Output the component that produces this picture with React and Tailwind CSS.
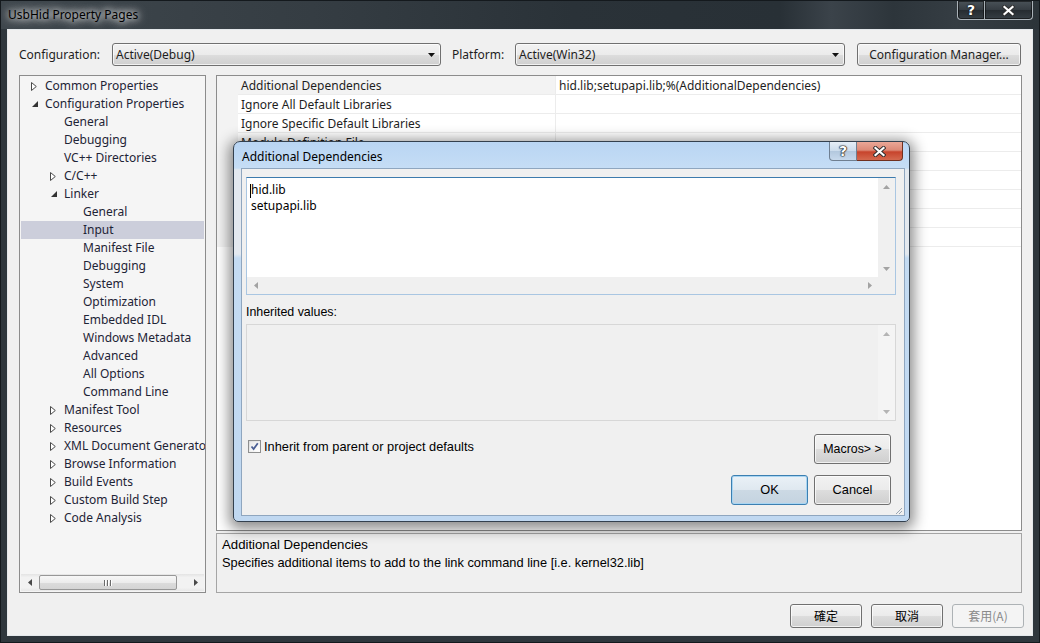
import React from 'react';

const TREE = [
  { t: 'Common Properties', l: 0, a: 'c' },
  { t: 'Configuration Properties', l: 0, a: 'e' },
  { t: 'General', l: 1 },
  { t: 'Debugging', l: 1 },
  { t: 'VC++ Directories', l: 1 },
  { t: 'C/C++', l: 1, a: 'c' },
  { t: 'Linker', l: 1, a: 'e' },
  { t: 'General', l: 2 },
  { t: 'Input', l: 2, sel: true },
  { t: 'Manifest File', l: 2 },
  { t: 'Debugging', l: 2 },
  { t: 'System', l: 2 },
  { t: 'Optimization', l: 2 },
  { t: 'Embedded IDL', l: 2 },
  { t: 'Windows Metadata', l: 2 },
  { t: 'Advanced', l: 2 },
  { t: 'All Options', l: 2 },
  { t: 'Command Line', l: 2 },
  { t: 'Manifest Tool', l: 1, a: 'c' },
  { t: 'Resources', l: 1, a: 'c' },
  { t: 'XML Document Generator', l: 1, a: 'c' },
  { t: 'Browse Information', l: 1, a: 'c' },
  { t: 'Build Events', l: 1, a: 'c' },
  { t: 'Custom Build Step', l: 1, a: 'c' },
  { t: 'Code Analysis', l: 1, a: 'c' },
];

const LVL = ['pl-[9px]', 'pl-[28px]', 'pl-[47px]'];

const PROPS = [
  ['Additional Dependencies', 'hid.lib;setupapi.lib;%(AdditionalDependencies)'],
  ['Ignore All Default Libraries', ''],
  ['Ignore Specific Default Libraries', ''],
  ['Module Definition File', ''],
  ['Add Module to Assembly', ''],
  ['Embed Managed Resource File', ''],
  ['Force Symbol References', ''],
  ['Delay Loaded Dlls', ''],
  ['Assembly Link Resource', ''],
];

const BTN =
  'flex items-center justify-center rounded-[3px] border border-[#707070] bg-[linear-gradient(#f2f2f2_0%,#ebebeb_50%,#dddddd_50%,#cfcfcf_100%)] shadow-[inset_0_0_0_1px_rgba(255,255,255,0.7)]';

function Tri({ dir, color = '#5a5a5a' }) {
  const v = dir === 'up' || dir === 'down';
  const w = v ? 7 : 4;
  const h = v ? 4 : 7;
  const pts = {
    up: '0,4 3.5,0 7,4',
    down: '0,0 7,0 3.5,4',
    left: '4,0 4,7 0,3.5',
    right: '0,0 0,7 4,3.5',
  }[dir];
  return (
    <svg width={w} height={h} viewBox={`0 0 ${w} ${h}`}>
      <polygon points={pts} fill={color} />
    </svg>
  );
}

function Collapsed() {
  return (
    <svg width="6" height="9" viewBox="0 0 6 9" className="ml-[1px]">
      <polygon points="0.5,0.5 5.3,4.5 0.5,8.5" fill="#ffffff" stroke="#4a4a4a" strokeWidth="1" />
    </svg>
  );
}

function Expanded() {
  return (
    <svg width="6" height="6" viewBox="0 0 6 6" className="ml-[2px]">
      <polygon points="6,0 6,6 0,6" fill="#333333" />
    </svg>
  );
}

function XGlyph() {
  return (
    <svg width="13" height="11" viewBox="0 0 13 11">
      <path d="M2.5,2 L10.5,9 M10.5,2 L2.5,9" stroke="#2e2e2e" strokeWidth="4" strokeLinecap="square" />
      <path d="M2.5,2 L10.5,9 M10.5,2 L2.5,9" stroke="#ffffff" strokeWidth="2.2" strokeLinecap="square" />
    </svg>
  );
}

function QGlyph() {
  return (
    <span className="font-['DejaVu_Sans',sans-serif] font-bold text-[14px] leading-none text-white [text-shadow:0_0_1px_#111,0_0_1px_#111,0_0_1px_#111,0_0_2px_#333]">
      ?
    </span>
  );
}

function Combo({ w, text }) {
  return (
    <div className={`${BTN} ${w} h-[23px] !justify-between pl-[3px] pr-[5px]`}>
      <span className="text-[12px] text-[#1e1e1e]">{text}</span>
      <svg width="7" height="4" viewBox="0 0 7 4">
        <polygon points="0,0 7,0 3.5,4" fill="#111" />
      </svg>
    </div>
  );
}

function Grip() {
  return (
    <div className="flex gap-[1px]">
      {[0, 1, 2].map((i) => (
        <div key={i} className="w-[2px] h-[6px] border-l border-[#6b6b6b] bg-white" />
      ))}
    </div>
  );
}

function Tree() {
  return (
    <div className="w-[187px] h-[518px] border border-[#8c8c8c] bg-[#f5f5f5] flex flex-col">
      <div className="flex-1 pt-[1px] overflow-hidden">
        {TREE.map((n, i) => (
          <div
            key={i}
            className={`h-[18px] mx-[1px] flex items-center whitespace-nowrap ${LVL[n.l]} ${n.sel ? 'bg-[#cccedb]' : ''}`}
          >
            <div className="w-[15px] shrink-0 flex items-center">
              {n.a === 'c' ? <Collapsed /> : n.a === 'e' ? <Expanded /> : null}
            </div>
            <span className="text-[12px] text-[#1e2436]">{n.t}</span>
          </div>
        ))}
      </div>
      <div className="h-[17px] mx-[1px] mb-[1px] flex bg-[linear-gradient(#e3e3e3_0%,#f2f2f2_20%,#f2f2f2_80%,#e8e8e8_100%)]">
        <div className="w-[17px] flex items-center justify-center">
          <Tri dir="left" color="#4a4a4a" />
        </div>
        <div className="flex-1 py-[1px]">
          <div className="ml-[1px] w-[138px] h-full rounded-[2px] border border-[#979797] bg-[linear-gradient(#f7f7f7_0%,#ececec_50%,#dcdcdc_51%,#d4d4d4_100%)] flex items-center justify-center">
            <Grip />
          </div>
        </div>
        <div className="w-[17px] flex items-center justify-center">
          <Tri dir="right" color="#4a4a4a" />
        </div>
      </div>
    </div>
  );
}

function Grid() {
  return (
    <div className="w-[806px] h-[456px] border border-[#8c8c8c] bg-white flex flex-col">
      {PROPS.map((p, i) => (
        <div key={i} className="flex h-[19px] shrink-0">
          <div className="w-[21px] bg-[#f3f3f3]" />
          <div
            className={`w-[318px] border-b border-r border-[#ececec] pl-[3px] pt-[2px] flex items-center whitespace-nowrap ${i === 0 ? 'bg-[#f3f3f3]' : ''}`}
          >
            <span className="text-[12px] text-[#1e1e1e]">{p[0]}</span>
          </div>
          <div className="flex-1 border-b border-[#ececec] pl-[3px] pt-[2px] flex items-center whitespace-nowrap">
            <span className="text-[12px] text-[#1e1e1e]">{p[1]}</span>
          </div>
        </div>
      ))}
    </div>
  );
}

function DialogTitleButtons() {
  return (
    <div className="ml-auto mr-[6px] self-start flex h-[19px]">
      <div className="w-[28px] h-full flex items-center justify-center rounded-bl-[4px] border border-t-0 border-[#6f7f91] bg-[linear-gradient(#e6eef7_0%,#ccdcec_48%,#b3c8de_52%,#c7d9ec_100%)]">
        <QGlyph />
      </div>
      <div className="w-[46px] h-full flex items-center justify-center rounded-br-[4px] border border-t-0 border-l-0 border-[#70301f] bg-[linear-gradient(#eaa797_0%,#dc8a77_45%,#c7442c_55%,#d4694f_100%)]">
        <XGlyph />
      </div>
    </div>
  );
}

function Dialog() {
  return (
    <div className="absolute left-[232px] top-[140px] w-[677px] h-[381px] rounded-t-[7px] rounded-b-[5px] border border-[#33404e] shadow-[0_3px_14px_4px_rgba(0,0,0,0.45)] bg-[linear-gradient(#b9d5f3_0px,#c5ddf5_26px,#e4e9ef_28px,#e4e9ef_112px,#c4dbf2_116px,#c0d8f1_100%)] flex flex-col">
      <div className="h-[26px] flex items-center shrink-0">
        <span className="pl-[8px] pt-[3px] text-[12px] text-black">Additional Dependencies</span>
        <DialogTitleButtons />
      </div>
      <div className="ml-[7px] mr-[4px] mb-[5px] flex-1 border border-[#8fa6bf] bg-[#f0f0f0] flex flex-col pl-[4px] pr-[8px] pt-[8px] pb-[9px]">
        {/* editable text area */}
        <div className="h-[118px] shrink-0 border border-[#a9c6e2] border-t-[#3d7bad] bg-white grid grid-cols-[1fr_17px] grid-rows-[1fr_17px]">
          <div className="relative pl-[4px] pt-[4px] text-[12px] leading-[16px] text-black">
            <span className="absolute left-[3px] top-[6px] w-[1px] h-[14px] bg-black" />
            <div>hid.lib</div>
            <div>setupapi.lib</div>
          </div>
          <div className="bg-[#f0f0f0] flex flex-col">
            <div className="h-[17px] flex items-center justify-center">
              <Tri dir="up" color="#a3a3a3" />
            </div>
            <div className="flex-1" />
            <div className="h-[17px] flex items-center justify-center">
              <Tri dir="down" color="#a3a3a3" />
            </div>
          </div>
          <div className="bg-[#f0f0f0] flex">
            <div className="w-[17px] flex items-center justify-center">
              <Tri dir="left" color="#a3a3a3" />
            </div>
            <div className="flex-1" />
            <div className="w-[17px] flex items-center justify-center">
              <Tri dir="right" color="#a3a3a3" />
            </div>
          </div>
          <div className="bg-[#f0f0f0]" />
        </div>

        <div className="mt-[8px] h-[16px] pt-[3px] flex items-center font-['Liberation_Sans',sans-serif] text-[12.4px] text-black">
          Inherited values:
        </div>

        <div className="mt-[5px] h-[97px] shrink-0 border border-[#d7d7d7] bg-[#f0f0f0] flex">
          <div className="flex-1" />
          <div className="w-[17px] bg-[#f4f4f4] flex flex-col">
            <div className="h-[17px] flex items-center justify-center">
              <Tri dir="up" color="#b4b4b4" />
            </div>
            <div className="flex-1" />
            <div className="h-[17px] flex items-center justify-center">
              <Tri dir="down" color="#b4b4b4" />
            </div>
          </div>
        </div>

        <div className="mt-[13px] h-[30px] flex items-start pr-[5px] font-['Liberation_Sans',sans-serif] text-[12.8px] text-black">
          <div className="mt-[6px] ml-[2px] flex items-center gap-[3px]">
            <div className="w-[13px] h-[13px] border border-[#8e8f8f] bg-[linear-gradient(135deg,#dcdcdc,#ffffff)] p-[1px]">
              <div className="w-full h-full bg-[linear-gradient(135deg,#e9e9e9,#ffffff)] flex items-center justify-center">
                <svg width="9" height="9" viewBox="0 0 9 9">
                  <path d="M1.5,4.5 L3.6,7 L7.8,1.2" stroke="#4b5f94" strokeWidth="1.8" fill="none" />
                </svg>
              </div>
            </div>
            <span className="leading-[13px]">Inherit from parent or project defaults</span>
          </div>
          <div className={`${BTN} ml-auto w-[77px] h-[30px] text-[12.4px]`}>Macros&gt; &gt;</div>
        </div>

        <div className="mt-[11px] h-[30px] flex justify-end gap-[6px] pr-[5px] font-['Liberation_Sans',sans-serif] text-[12.8px] text-black">
          <div className="w-[77px] h-[30px] flex items-center justify-center rounded-[3px] border border-[#3c7fb1] bg-[linear-gradient(#eaf1f7_0%,#dfe8f0_50%,#ccd9e4_51%,#c4d3e0_100%)] shadow-[inset_0_0_0_1px_#a8d5f2]">
            OK
          </div>
          <div className={`${BTN} w-[77px] h-[30px]`}>Cancel</div>
        </div>
      </div>
      {/* resize grip */}
      <svg width="9" height="9" viewBox="0 0 9 9" className="absolute right-[6px] bottom-[6px]">
        <path d="M8,2 L2,8 M8,5 L5,8" stroke="#9aa6b2" strokeWidth="1" />
      </svg>
    </div>
  );
}

export default function App() {
  return (
    <div className="relative w-[1040px] h-[643px] overflow-hidden border border-[#14191d] bg-[#2f373d] flex flex-col font-['Noto_Sans',sans-serif] text-[12px] leading-none text-[#1e1e1e]">
      {/* Title bar */}
      <div className="h-[28px] shrink-0 flex bg-[linear-gradient(90deg,#3f474d_0%,#353d43_30%,#2a3238_55%,#283036_75%,#3b434a_80%,#2d353b_86%,#353d43_92%,#2c3439_100%)]">
        <div className="pl-[7px] flex items-center">
          <span className="text-[12px] text-black [text-shadow:0_0_6px_rgba(255,255,255,0.95),0_0_10px_rgba(255,255,255,0.8),0_0_14px_rgba(255,255,255,0.6)]">
            UsbHid Property Pages
          </span>
        </div>
        <div className="ml-auto mr-[6px] flex h-[19px]">
          <div className="w-[28px] h-full flex items-center justify-center rounded-bl-[4px] border border-t-0 border-[#aab2b8] bg-[linear-gradient(#4a5258_0%,#353c42_50%,#262c31_52%,#363e44_100%)] shadow-[inset_0_0_0_1px_rgba(0,0,0,0.5)]">
            <QGlyph />
          </div>
          <div className="w-[48px] h-full flex items-center justify-center rounded-br-[4px] border border-t-0 border-l-0 border-[#aab2b8] bg-[linear-gradient(#4a5258_0%,#353c42_50%,#262c31_52%,#363e44_100%)] shadow-[inset_0_0_0_1px_rgba(0,0,0,0.5)]">
            <XGlyph />
          </div>
        </div>
      </div>

      {/* Client */}
      <div className="ml-[6px] mr-[6px] mb-[6px] flex-1 border border-[#e4e8eb] bg-[#f0f0f0] flex flex-col pt-[13px] pb-[7px]">
        <div className="h-[23px] flex items-center pl-[11px]">
          <span className="w-[93px] text-[12px]">Configuration:</span>
          <Combo w="w-[329px]" text="Active(Debug)" />
          <span className="ml-[11px] w-[63px] text-[12px]">Platform:</span>
          <Combo w="w-[330px]" text="Active(Win32)" />
          <div className={`${BTN} ml-[12px] w-[164px] h-[23px] text-[12px]`}>Configuration Manager...</div>
        </div>

        <div className="mt-[9px] flex pl-[11px] gap-[10px]">
          <Tree />
          <div className="flex flex-col gap-[2px]">
            <Grid />
            <div className="w-[806px] h-[60px] border border-[#a5a5a5] bg-[#f0f0f0] pl-[5px] pt-[2px] text-black">
              <div className="h-[18px] flex items-center font-['Liberation_Sans',sans-serif] text-[13.2px]">
                Additional Dependencies
              </div>
              <div className="h-[18px] flex items-center font-['Liberation_Sans',sans-serif] text-[12.8px]">
                Specifies additional items to add to the link command line [i.e. kernel32.lib]
              </div>
            </div>
          </div>
        </div>

        <div className="mt-[11px] h-[24px] flex justify-end gap-[9px] pr-[8px] font-['Noto_Sans_CJK_TC',sans-serif] text-[12px]">
          <div className={`${BTN} w-[72px] h-[24px] text-black`}>確定</div>
          <div className={`${BTN} w-[72px] h-[24px] text-black`}>取消</div>
          <div className="w-[72px] h-[24px] flex items-center justify-center rounded-[3px] border border-[#adb2b5] bg-[#f4f4f4] text-[#8a8a8a]">
            套用(A)
          </div>
        </div>
      </div>

      <Dialog />
    </div>
  );
}
